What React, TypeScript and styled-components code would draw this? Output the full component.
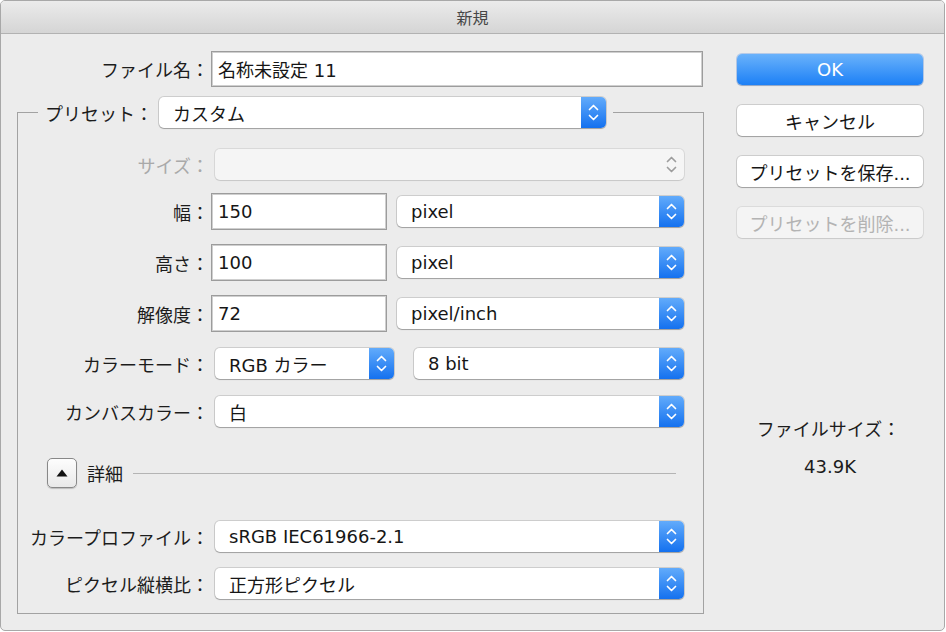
import React from 'react';
import styled, { createGlobalStyle } from 'styled-components';

const GlobalStyle = createGlobalStyle`
  html, body {
    margin: 0;
    padding: 0;
    background: #ffffff;
  }
  body {
    font-family: "DejaVu Sans", "Noto Sans CJK JP", sans-serif;
    font-size: 18px;
    color: #1c1c1c;
  }
  * {
    box-sizing: border-box;
  }
`;

const Chevrons = ({ color = '#ffffff' }: { color?: string }) => (
  <svg width="25" height="31" viewBox="0 0 25 31" fill="none">
    <path d="M8.5 12.5 L12.5 8.5 L16.5 12.5" stroke={color} strokeWidth="1.7" strokeLinecap="round" strokeLinejoin="round" />
    <path d="M8.5 18.5 L12.5 22.5 L16.5 18.5" stroke={color} strokeWidth="1.7" strokeLinecap="round" strokeLinejoin="round" />
  </svg>
);

const PopUp = ({ value, width, offset = 0, disabled = false }: PopUpProps) => (
  <Select $width={width} $offset={offset} $disabled={disabled}>
    <SelectValue>{value}</SelectValue>
    <Stepper $disabled={disabled}>
      <Chevrons color={disabled ? '#9d9d9d' : '#ffffff'} />
    </Stepper>
  </Select>
);

const App = () => {
  return (
    <>
      <GlobalStyle />
      <Window>
        <TitleBar>新規</TitleBar>
        <Body>
          <LeftPane>
            <Row $height={36} $gap={0}>
              <Label $width={192}>ファイル名：</Label>
              <TextField $width={492}>名称未設定 11</TextField>
            </Row>

            <PresetGroup>
              <PresetLegend>
                <LegendLabel>プリセット：</LegendLabel>
                <PopUp value="カスタム" width={447} />
              </PresetLegend>

              <Row $height={31} $gap={21}>
                <Label $width={191} $disabled>サイズ：</Label>
                <PopUp value="" width={469} offset={6} disabled />
              </Row>
              <Row $height={37} $gap={13}>
                <Label $width={191}>幅：</Label>
                <TextField $width={176}>150</TextField>
                <PopUp value="pixel" width={287} offset={10} />
              </Row>
              <Row $height={37} $gap={14}>
                <Label $width={191}>高さ：</Label>
                <TextField $width={176}>100</TextField>
                <PopUp value="pixel" width={287} offset={10} />
              </Row>
              <Row $height={37} $gap={14}>
                <Label $width={191}>解像度：</Label>
                <TextField $width={176}>72</TextField>
                <PopUp value="pixel/inch" width={287} offset={10} />
              </Row>
              <Row $height={31} $gap={16}>
                <Label $width={191}>カラーモード：</Label>
                <PopUp value="RGB カラー" width={179} offset={6} />
                <PopUp value="8 bit" width={270} offset={20} />
              </Row>
              <Row $height={31} $gap={17}>
                <Label $width={191}>カンバスカラー：</Label>
                <PopUp value="白" width={469} offset={6} />
              </Row>
              <Row $height={30} $gap={31}>
                <Disclosure>
                  <svg width="12" height="8" viewBox="0 0 12 8">
                    <path d="M6 0.5 L11.5 7.5 L0.5 7.5 Z" fill="#111111" />
                  </svg>
                </Disclosure>
                <DetailsText>詳細</DetailsText>
                <Rule />
              </Row>
              <Row $height={31} $gap={33}>
                <Label $width={191}>カラープロファイル：</Label>
                <PopUp value="sRGB IEC61966-2.1" width={469} offset={6} />
              </Row>
              <Row $height={31} $gap={16}>
                <Label $width={191}>ピクセル縦横比：</Label>
                <PopUp value="正方形ピクセル" width={469} offset={6} />
              </Row>
            </PresetGroup>
          </LeftPane>

          <RightPane>
            <Button $primary>OK</Button>
            <Button>キャンセル</Button>
            <Button>プリセットを保存...</Button>
            <Button $disabled>プリセットを削除...</Button>
            <FileSize>
              <FileSizeLabel>ファイルサイズ：</FileSizeLabel>
              <FileSizeValue>43.9K</FileSizeValue>
            </FileSize>
          </RightPane>
        </Body>
      </Window>
    </>
  );
};

const Window = styled.div`
  width: 945px;
  height: 631px;
  display: flex;
  flex-direction: column;
  background: #ececec;
  border: 1px solid #a8a8a8;
  border-radius: 5px;
  overflow: hidden;
`;

const TitleBar = styled.div`
  flex: none;
  height: 33px;
  display: flex;
  align-items: center;
  justify-content: center;
  background: linear-gradient(#ebebeb, #d5d5d5);
  border-bottom: 1px solid #b2b2b2;
  font-size: 16px;
  color: #474747;
`;

const Body = styled.div`
  display: flex;
  padding: 17px 0 0 16px;
`;

const LeftPane = styled.div`
  width: 687px;
  display: flex;
  flex-direction: column;
`;

const Row = styled.div<{ $height: number; $gap: number }>`
  display: flex;
  align-items: center;
  height: ${({ $height }) => $height}px;
  margin-top: ${({ $gap }) => $gap}px;
`;

const Label = styled.span<{ $width: number; $disabled?: boolean }>`
  flex: none;
  width: ${({ $width }) => $width}px;
  text-align: right;
  white-space: nowrap;
  color: ${({ $disabled }) => ($disabled ? '#a9a9a9' : '#1c1c1c')};
`;

const TextField = styled.div<{ $width: number }>`
  flex: none;
  width: ${({ $width }) => $width}px;
  height: 100%;
  margin-left: 2px;
  padding-left: 6px;
  display: flex;
  align-items: center;
  background: #ffffff;
  border: 1px solid #9c9c9c;
  box-shadow: inset 0 0 0 1px #cfcfcf;
  color: #161616;
  white-space: nowrap;
`;

const Select = styled.div<{ $width: number; $offset: number; $disabled: boolean }>`
  flex: none;
  width: ${({ $width }) => $width}px;
  height: 31px;
  margin-left: ${({ $offset }) => $offset}px;
  display: flex;
  align-items: center;
  border-radius: 5px;
  overflow: hidden;
  background: ${({ $disabled }) => ($disabled ? '#f5f5f5' : '#ffffff')};
  box-shadow: ${({ $disabled }) =>
    $disabled
      ? '0 0 0 1px rgba(0,0,0,0.08), 0 1px 1px rgba(0,0,0,0.08)'
      : '0 0 0 1px rgba(0,0,0,0.13), 0 1px 1px rgba(0,0,0,0.22)'};
`;

const SelectValue = styled.span`
  flex: 1;
  padding-left: 14px;
  color: #161616;
  white-space: nowrap;
`;

const Stepper = styled.span<{ $disabled: boolean }>`
  flex: none;
  width: 25px;
  height: 31px;
  display: flex;
  background: ${({ $disabled }) => ($disabled ? 'transparent' : 'linear-gradient(#62abfb, #1471ef)')};
`;

const PresetGroup = styled.fieldset`
  margin: 10px 0 0 0;
  padding: 0 0 14px 0;
  min-width: 0;
  border: 1px solid #a2a2a2;
  display: flex;
  flex-direction: column;
`;

const PresetLegend = styled.legend`
  margin-left: 20px;
  padding: 0 7px;
  display: flex;
  align-items: center;
`;

const LegendLabel = styled.span`
  margin-right: 6px;
  white-space: nowrap;
  color: #1c1c1c;
`;

const Disclosure = styled.div`
  flex: none;
  width: 30px;
  height: 30px;
  margin-left: 29px;
  display: flex;
  align-items: center;
  justify-content: center;
  border-radius: 5px;
  background: linear-gradient(#fdfdfd, #e9e9e9);
  border: 1px solid #888888;
  box-shadow: 0 1px 1px rgba(0, 0, 0, 0.2);
  svg {
    margin-top: -1px;
  }
`;

const DetailsText = styled.span`
  margin-left: 10px;
  color: #1c1c1c;
`;

const Rule = styled.div`
  flex: 1;
  height: 1px;
  margin: 0 27px 0 10px;
  background: #b4b4b4;
`;

const RightPane = styled.div`
  width: 186px;
  margin-left: 33px;
  padding-top: 3px;
  display: flex;
  flex-direction: column;
  gap: 20px;
`;

const Button = styled.div<{ $primary?: boolean; $disabled?: boolean }>`
  height: 31px;
  display: flex;
  align-items: center;
  justify-content: center;
  border-radius: 5px;
  white-space: nowrap;
  color: ${({ $primary, $disabled }) => ($primary ? '#ffffff' : $disabled ? '#b3b3b3' : '#161616')};
  background: ${({ $primary, $disabled }) =>
    $primary ? 'linear-gradient(#6ab2fb, #1c80f6)' : $disabled ? '#f4f4f4' : '#ffffff'};
  box-shadow: ${({ $primary, $disabled }) =>
    $primary
      ? '0 0 0 1px rgba(20,100,220,0.25), 0 1px 1px rgba(0,0,0,0.2)'
      : $disabled
        ? '0 0 0 1px rgba(0,0,0,0.07), 0 1px 1px rgba(0,0,0,0.08)'
        : '0 0 0 1px rgba(0,0,0,0.13), 0 1px 1px rgba(0,0,0,0.22)'};
`;

const FileSize = styled.div`
  margin-top: 160px;
  display: flex;
  flex-direction: column;
  align-items: center;
  gap: 13px;
  color: #1c1c1c;
`;

const FileSizeLabel = styled.span`
  line-height: 24px;
  margin-left: -3px;
`;

const FileSizeValue = styled.span`
  line-height: 24px;
`;

interface PopUpProps {
  value: string;
  width: number;
  offset?: number;
  disabled?: boolean;
}

export default App;
